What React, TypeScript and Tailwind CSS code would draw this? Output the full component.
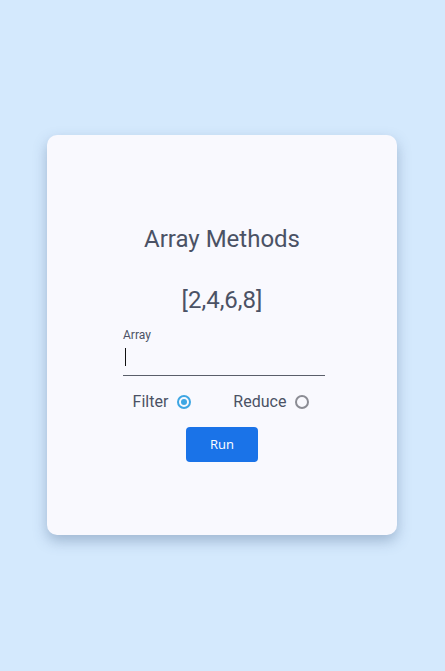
import React from "react";

export default function App() {
  return (
    <div className="w-[445px] h-[671px] bg-[#d4e9fd] flex items-start justify-start pl-[47px] pt-[135px]" style={{ fontFamily: "Roboto, 'Liberation Sans', sans-serif" }}>
      <div className="w-[350px] h-[400px] bg-[#f9f9fe] rounded-[10px] shadow-[0_6px_14px_rgba(60,90,130,0.35)] flex flex-col items-center pt-[89px]">
        <h1 className="text-[24px] leading-[30px] text-[#4b5265] font-normal">Array Methods</h1>
        <div className="mt-[31px] text-[24px] leading-[30px] text-[#4b5265]">[2,4,6,8]</div>
        <div className="mt-[13px] ml-[4px] w-[202px] flex flex-col">
          <label className="text-[12px] leading-[14px] text-[#4b5265]">Array</label>
          <div className="h-[34px] border-b border-[#5a5f6a] flex items-start pt-[6px] pl-[2px]">
            <div className="w-px h-[18px] bg-[#111]" />
          </div>
        </div>
        <div className="mt-[16px] mr-[2px] flex items-center gap-[42px] text-[16px] leading-[20px] text-[#4b5265]">
          <div className="flex items-center gap-[9px]">
            <span>Filter</span>
            <span className="w-[14px] h-[14px] rounded-full border-2 border-[#3ea6e3] flex items-center justify-center">
              <span className="w-[6px] h-[6px] rounded-full bg-[#3ea6e3]" />
            </span>
          </div>
          <div className="flex items-center gap-[9px]">
            <span>Reduce</span>
            <span className="w-[14px] h-[14px] rounded-full border-2 border-[#8b8c94]" />
          </div>
        </div>
        <button className="mt-[15px] w-[72px] h-[35px] rounded-[4px] bg-[#1a73e8] text-white text-[13px]" style={{ fontFamily: "'Open Sans', sans-serif" }}>Run</button>
      </div>
    </div>
  );
}
